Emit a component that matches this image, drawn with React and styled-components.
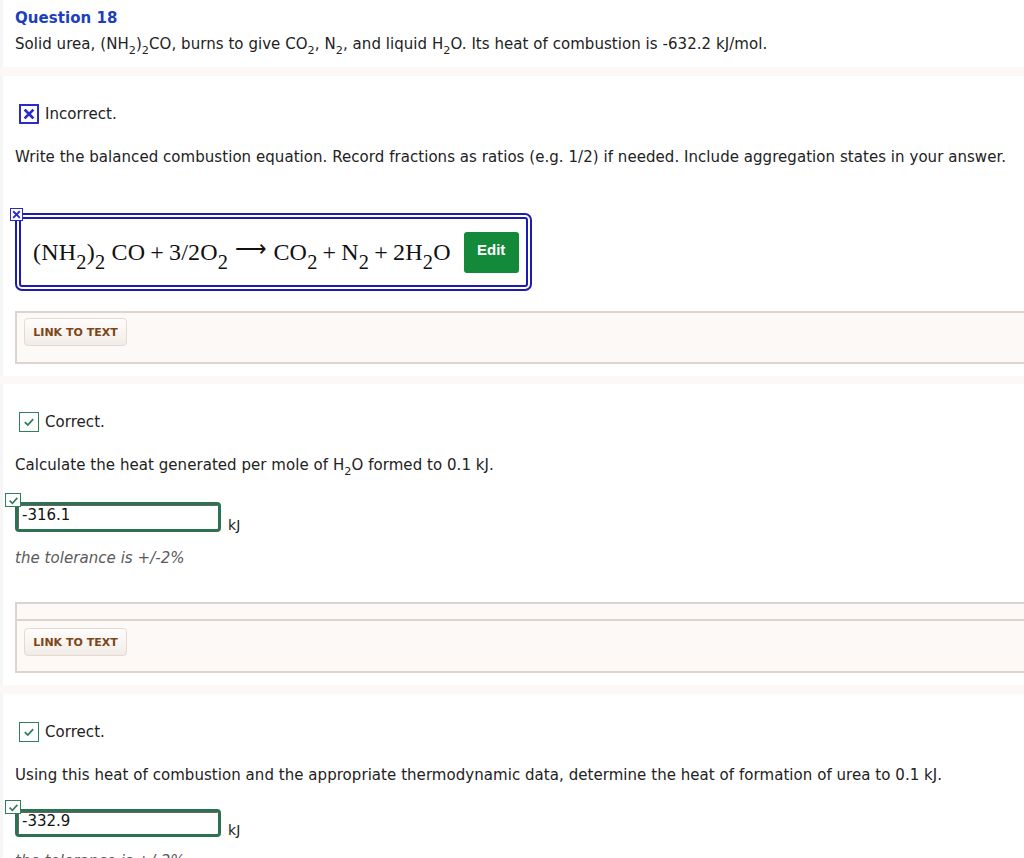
import styled, { createGlobalStyle } from 'styled-components';

const GlobalStyle = createGlobalStyle`
    html, body {
        margin: 0;
        padding: 0;
        background: #fff;
    }
    body {
        font-family: "DejaVu Sans", Verdana, sans-serif;
        font-size: 15px;
        letter-spacing: 0.05px;
        color: #222;
        overflow: hidden;
    }
`;

const Page = styled.div`
    width: 1024px;
    border-left: 3px solid #f7f6f6;
    box-sizing: border-box;
`;

const Header = styled.div`
    padding: 8px 0 13px 12px;
`;

const Title = styled.div`
    font-weight: bold;
    font-size: 15px;
    line-height: 20px;
    color: #1b3fbd;
`;

const Line = styled.div`
    line-height: 20px;
    margin-top: ${(props) => props.top || 0}px;
    white-space: nowrap;
`;

const Band = styled.div`
    height: ${(props) => props.h || 9}px;
    background: #fcf8f6;
    margin-left: -3px;
`;

const Part = styled.div`
    padding: 28px 0 12px 12px;
`;

const Status = styled.div`
    display: flex;
    align-items: center;
    gap: 6px;
    height: 20px;
    padding-left: 4px;
`;

const StatusBox = styled.span`
    width: 20px;
    height: 20px;
    box-sizing: border-box;
    display: flex;
    align-items: center;
    justify-content: center;
    border: 2px solid ${(props) => (props.ok ? '#2f7f5a' : '#2b2bc8')};
    ${(props) => (props.ok ? 'border-width: 1.5px;' : '')}
    background: #fff;
`;

const Sub = styled.span`
    font-size: 0.75em;
    vertical-align: -0.42em;
    line-height: 0;
`;

const EqSub = styled.span`
    font-size: 0.85em;
    vertical-align: -0.45em;
    line-height: 0;
`;

const AnswerWrap = styled.div`
    position: relative;
    display: flex;
    width: fit-content;
    margin-top: 46px;
`;

const Corner = styled.span`
    position: absolute;
    left: ${(props) => props.x}px;
    top: ${(props) => props.y}px;
    width: ${(props) => props.w}px;
    height: ${(props) => props.h}px;
    box-sizing: border-box;
    display: flex;
    align-items: center;
    justify-content: center;
    background: #fff;
    border: 1.5px solid ${(props) => props.color};
    z-index: 1;
`;

const EquationBox = styled.div`
    display: inline-flex;
    align-items: center;
    border: 6px double #1c1cb4;
    border-radius: 7px;
    padding: 0 7px 0 12px;
    box-sizing: border-box;
    height: 78px;
`;

const Equation = styled.div`
    font-family: "Liberation Serif", "Times New Roman", serif;
    font-size: 24px;
    white-space: nowrap;
    color: #111;
    margin: -3px 13px 0 0;
    letter-spacing: 0.2px;
`;

const Op = styled.span`
    margin: 0 5px;
`;

const Arrow = styled.span`
    display: inline-block;
    margin: 0 6px 0 7px;
    vertical-align: 4px;
    font-size: 0.9em;
`;

const EditButton = styled.button`
    width: 55px;
    height: 41px;
    border: none;
    border-radius: 3px;
    background: #13893a;
    color: #fff;
    font-family: "Liberation Sans", Arial, sans-serif;
    font-weight: bold;
    font-size: 15px;
    padding: 0 0 6px;
`;

const LinkPanel = styled.div`
    margin-top: ${(props) => props.top}px;
    border: 2px solid #ddd4cd;
    border-right: none;
    background: #fcf9f7;
`;

const PanelHead = styled.div`
    height: 15px;
    border-bottom: 2px solid #ddd4cd;
`;

const PanelBody = styled.div`
    padding: ${(props) => props.pad};
`;

const LinkButton = styled.button`
    height: 28px;
    width: 103px;
    border: 1px solid #e3dad2;
    border-radius: 4px;
    background: linear-gradient(#fefdfc, #f1ece7);
    color: #7c4619;
    font-family: "DejaVu Sans", Verdana, sans-serif;
    font-weight: bold;
    font-size: 11px;
    padding: 0;
`;

const InputRow = styled.div`
    position: relative;
    display: flex;
    align-items: flex-end;
    margin-top: ${(props) => props.top}px;
`;

const Field = styled.input`
    width: 206px;
    height: ${(props) => props.h}px;
    box-sizing: border-box;
    border: 3px solid #2e7152;
    border-radius: 4px;
    box-shadow: inset 1px 1px 0 #666;
    padding: 0 0 4px 4px;
    font-family: "DejaVu Sans", Verdana, sans-serif;
    font-size: 15px;
    color: #111;
    background: #fff;
    outline: none;
`;

const Unit = styled.span`
    margin-left: 7px;
    margin-bottom: -1px;
    font-size: 14px;
`;

const Note = styled.div`
    margin-top: ${(props) => props.top}px;
    line-height: 20px;
    font-style: italic;
    color: #5a5a5a;
`;

const Cross = ({ size = 12, color = '#2b2bc8' }) => (
    <svg width={size} height={size} viewBox="0 0 12 12">
        <path d="M2.5 2.5 L9.5 9.5 M9.5 2.5 L2.5 9.5" stroke={color} strokeWidth="2.6" strokeLinecap="square" />
    </svg>
);

const Check = ({ size = 12, color = '#2f7f5a' }) => (
    <svg width={size} height={size} viewBox="0 0 12 12">
        <path d="M1.8 6.2 L4.8 9 L10.2 3.2" stroke={color} strokeWidth="1.8" fill="none" />
    </svg>
);

const LinkToText = ({ top, head, pad }) => (
    <LinkPanel top={top}>
        {head && <PanelHead />}
        <PanelBody pad={pad}>
            <LinkButton>LINK TO TEXT</LinkButton>
        </PanelBody>
    </LinkPanel>
);

const NumberAnswer = ({ top, value, h }) => (
    <InputRow top={top}>
        <Corner x={-10} y={-9} w={16} h={14} color="#2f7f5a">
            <Check size={11} />
        </Corner>
        <Field readOnly value={value} h={h} />
        <Unit>kJ</Unit>
    </InputRow>
);

const App = () => (
    <Page>
        <GlobalStyle />
        <Header>
            <Title>Question 18</Title>
            <Line top={6}>
                Solid urea, (NH<Sub>2</Sub>)<Sub>2</Sub>CO, burns to give CO<Sub>2</Sub>, N<Sub>2</Sub>, and liquid H
                <Sub>2</Sub>O. Its heat of combustion is -632.2 kJ/mol.
            </Line>
        </Header>
        <Band h={9} />

        <Part>
            <Status>
                <StatusBox>
                    <Cross />
                </StatusBox>
                Incorrect.
            </Status>
            <Line top={23}>
                Write the balanced combustion equation. Record fractions as ratios (e.g. 1/2) if needed. Include
                aggregation states in your answer.
            </Line>
            <AnswerWrap>
                <Corner x={-5} y={-5} w={13} h={13} color="#2b2bc8">
                    <Cross size={9} />
                </Corner>
                <EquationBox>
                    <Equation>
                        (NH<EqSub>2</EqSub>)<EqSub>2</EqSub> CO<Op>+</Op>3/2O<EqSub>2</EqSub>
                        <Arrow>⟶</Arrow>CO<EqSub>2</EqSub>
                        <Op>+</Op>N<EqSub>2</EqSub>
                        <Op>+</Op>2H<EqSub>2</EqSub>O
                    </Equation>
                    <EditButton>Edit</EditButton>
                </EquationBox>
            </AnswerWrap>
            <LinkToText top={20} pad="5px 7px 16px" />
        </Part>
        <Band h={8} />

        <Part>
            <Status>
                <StatusBox ok>
                    <Check />
                </StatusBox>
                Correct.
            </Status>
            <Line top={23}>
                Calculate the heat generated per mole of H<Sub>2</Sub>O formed to 0.1 kJ.
            </Line>
            <NumberAnswer top={27} value="-316.1" h={30} />
            <Note top={16}>the tolerance is +/-2%</Note>
            <LinkToText top={34} head pad="7px 7px 15px" />
        </Part>
        <Band h={9} />

        <Part>
            <Status>
                <StatusBox ok>
                    <Check />
                </StatusBox>
                Correct.
            </Status>
            <Line top={23}>
                Using this heat of combustion and the appropriate thermodynamic data, determine the heat of formation of
                urea to 0.1 kJ.
            </Line>
            <NumberAnswer top={24} value="-332.9" h={28} />
            <Note top={14}>the tolerance is +/-2%</Note>
        </Part>
    </Page>
);

export default App;
